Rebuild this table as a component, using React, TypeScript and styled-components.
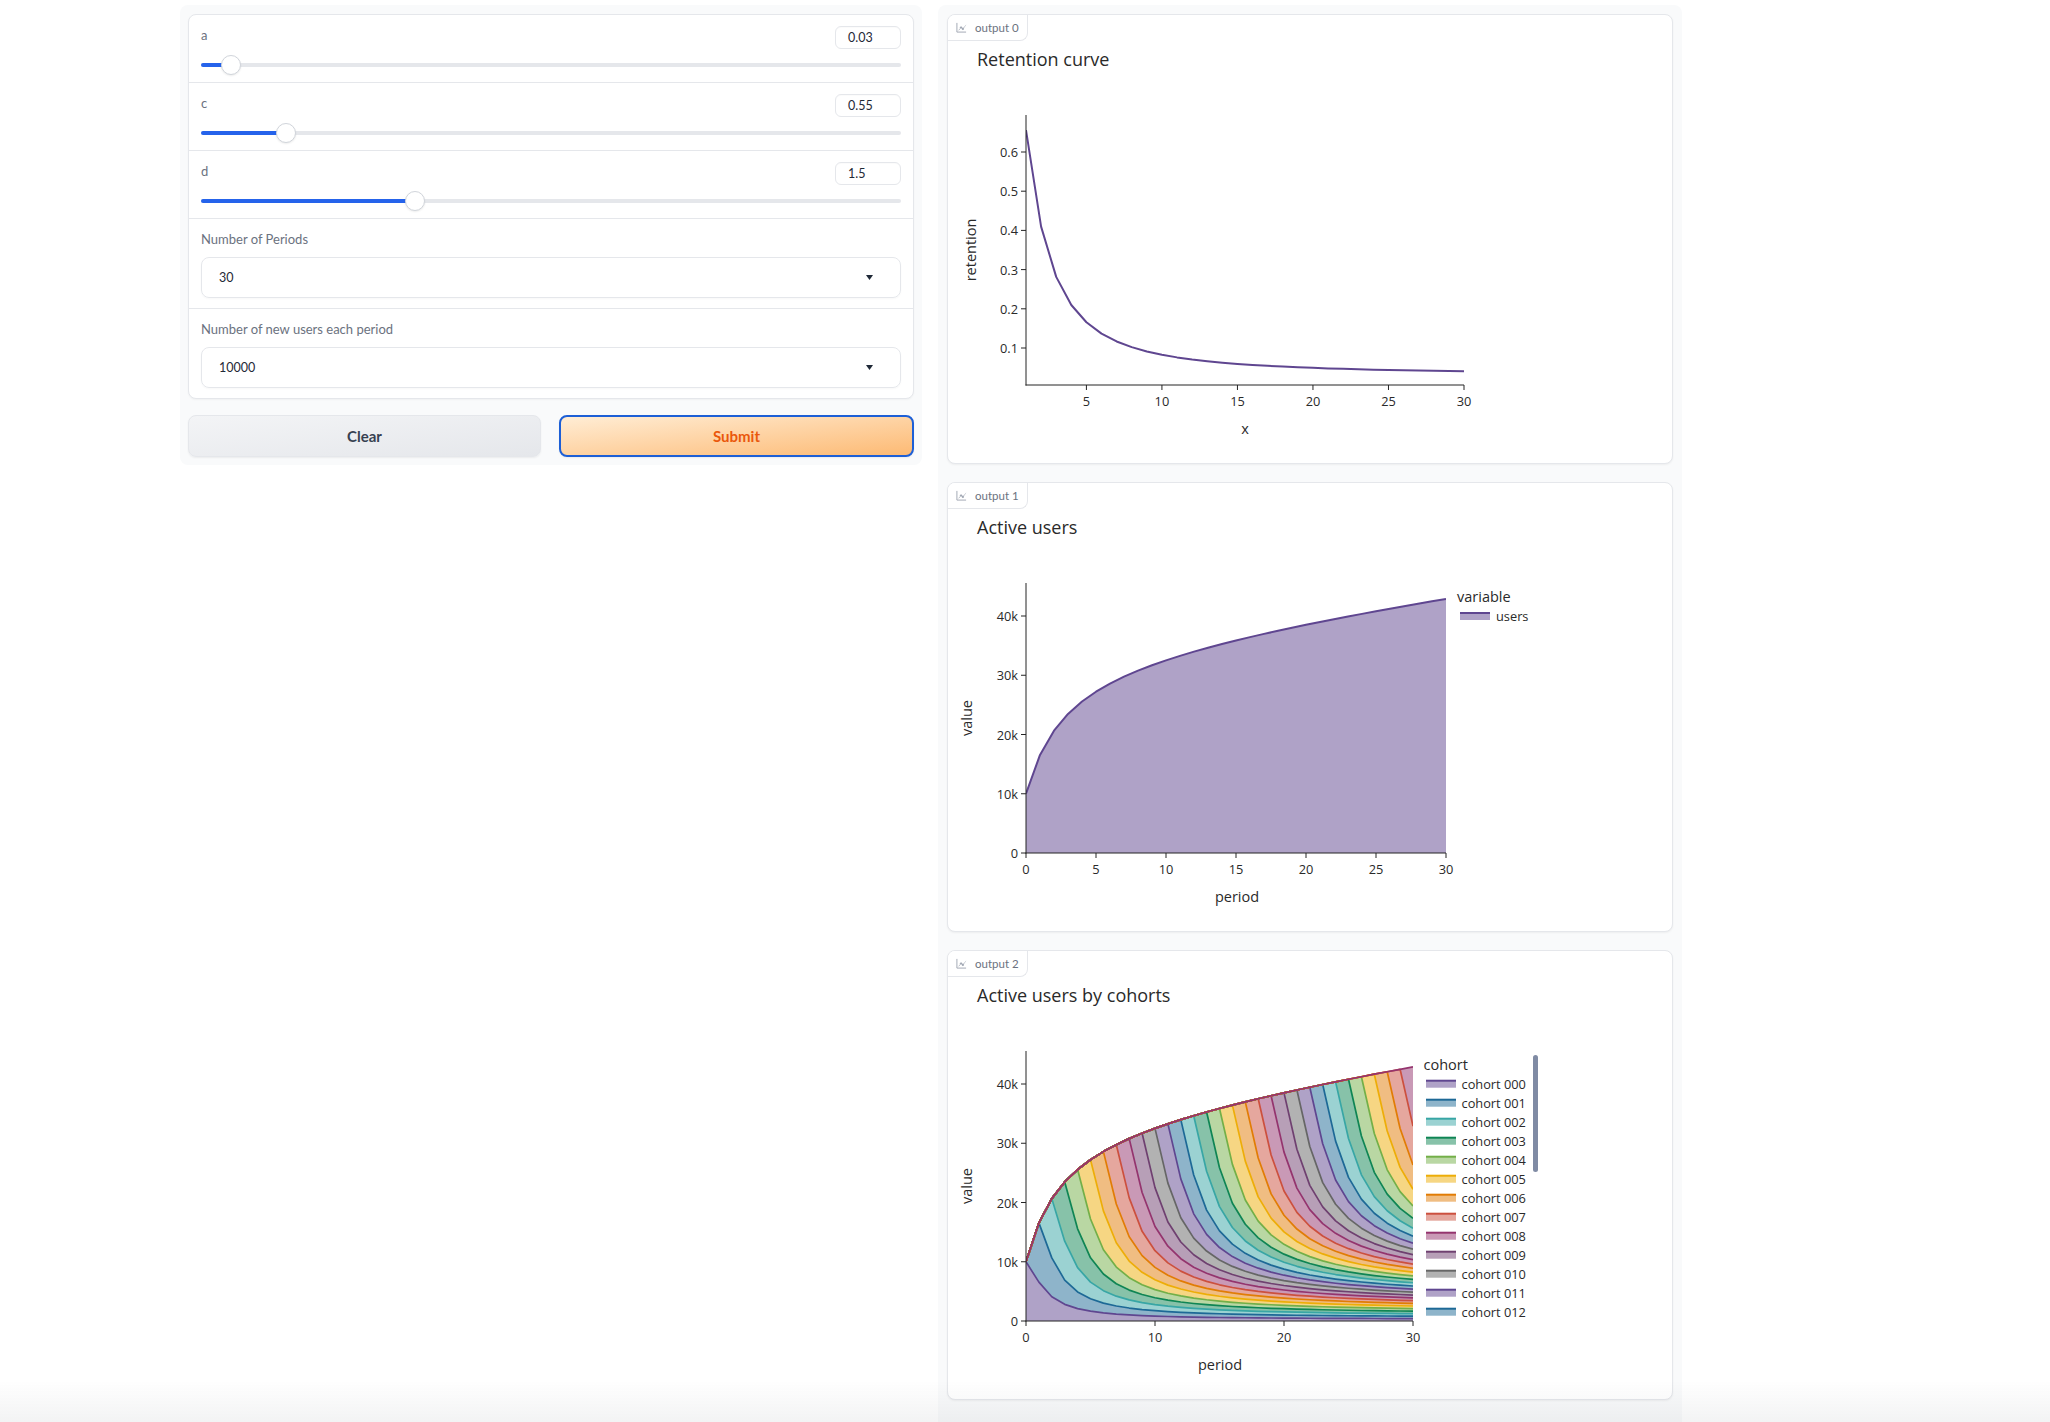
import React from 'react';
import styled, {createGlobalStyle} from "styled-components";

// model parameters shown in the form
const A = 0.03;
const C = 0.55;
const D = 1.5;
const PERIODS = 30;
const NEW_USERS = 10000;

const retention = (x: number) => A + (1 - A) / (1 + C * Math.pow(x, D));
const range = (n: number) => Array.from({length: n}, (_, i) => i);

const PRISM = [
    [95, 70, 144], [29, 105, 150], [56, 166, 165], [15, 133, 84], [115, 175, 72], [237, 173, 8],
    [225, 124, 5], [204, 80, 62], [148, 52, 110], [111, 64, 112], [102, 102, 102],
];
const rgb = (c: number[], alpha = 1) => `rgba(${c[0]}, ${c[1]}, ${c[2]}, ${alpha})`;

const cohorts = range(PERIODS + 1).map(i =>
    range(PERIODS + 1).map(t => (t >= i ? NEW_USERS * retention(t - i) : 0))
);
const cumulative: number[][] = [];
cohorts.forEach((vals, i) => cumulative.push(vals.map((v, t) => v + (i ? cumulative[i - 1][t] : 0))));
const totals = cumulative[PERIODS];

const PLOT_TOP = 100;
const PLOT_BOTTOM = 370;
const PLOT_LEFT = 78;
const AXIS = '#242424';
const PLOT_FONT = '"Open Sans", "DejaVu Sans", sans-serif';

const GlobalStyle = createGlobalStyle`
  html, body {
    margin: 0;
    padding: 0;
    background: #ffffff;
  }

  body {
    font-family: Lato, "Liberation Sans", sans-serif;
    color: #1f2937;
  }

  * {
    box-sizing: border-box;
  }
`

const Page = styled.div`
  display: flex;
  align-items: flex-start;
  gap: 16px;
  padding: 5px 0 0 180px;
`

const LeftColumn = styled.div`
  width: 742px;
  background: #f9fafb;
  border-radius: 8px;
  padding: 9px 8px 8px;
`

const FormCard = styled.div`
  background: #ffffff;
  border: 1px solid #e5e7eb;
  border-radius: 8px;
  box-shadow: 0 1px 2px rgba(0, 0, 0, 0.04);
  overflow: hidden;
`

const SliderBlock = styled.div`
  height: 68px;
  padding: 11px 12px 0;
  border-bottom: 1px solid #e5e7eb;
`

const DropBlock = styled.div<{ $last?: boolean }>`
  height: ${p => (p.$last ? 89 : 90)}px;
  padding: 11px 12px 0;
  border-bottom: ${p => (p.$last ? 'none' : '1px solid #e5e7eb')};
`

const BlockHead = styled.div`
  display: flex;
  align-items: flex-start;
  justify-content: space-between;
  height: 23px;
`

const Label = styled.span`
  display: block;
  font-size: 13px;
  line-height: 18px;
  color: #6b7280;
`

const HeadLabel = styled(Label)`
  margin-top: 0;
`

const NumberBox = styled.div`
  width: 66px;
  height: 23px;
  border: 1px solid #e5e7eb;
  border-radius: 6px;
  padding-left: 12px;
  font-size: 12.5px;
  line-height: 21px;
  color: #1f2937;
  box-shadow: inset 0 1px 1px rgba(0, 0, 0, 0.02);
`

const TrackWrap = styled.div`
  position: relative;
  height: 20px;
  margin-top: 6px;
  display: flex;
  align-items: center;
`

const Track = styled.div`
  width: 100%;
  height: 4px;
  border-radius: 2px;
  background: #e5e7eb;
  overflow: hidden;
`

const TrackFill = styled.div`
  height: 100%;
  background: #2563eb;
`

const Thumb = styled.div`
  position: absolute;
  top: 0;
  width: 20px;
  height: 20px;
  margin-left: -10px;
  border-radius: 50%;
  background: #ffffff;
  border: 1px solid #d1d5db;
  box-shadow: 0 1px 2px rgba(0, 0, 0, 0.08);
`

const DropBox = styled.div`
  margin-top: 9px;
  height: 41px;
  border: 1px solid #e5e7eb;
  border-radius: 8px;
  padding: 0 27px 0 17px;
  display: flex;
  align-items: center;
  justify-content: space-between;
  font-size: 12.5px;
  color: #1f2937;
  box-shadow: 0 1px 2px rgba(0, 0, 0, 0.03);
`

const ButtonRow = styled.div`
  display: flex;
  gap: 18px;
  margin-top: 16px;
`

const Button = styled.button<{ $primary?: boolean }>`
  flex: 1;
  height: 42px;
  border-radius: 8px;
  font-family: Lato, "Liberation Sans", sans-serif;
  font-size: 15px;
  font-weight: 700;
  cursor: pointer;
  border: ${p => (p.$primary ? '2px solid #1d5fd6' : '1px solid #e5e7eb')};
  background: ${p => (p.$primary
          ? 'linear-gradient(to bottom right, #ffedd5, #fdba74)'
          : 'linear-gradient(to bottom right, #f3f4f6, #e5e7eb)')};
  color: ${p => (p.$primary ? '#ea580c' : '#374151')};
  box-shadow: 0 1px 2px rgba(0, 0, 0, 0.06);
`

const RightColumn = styled.div`
  width: 744px;
  background: #f9fafb;
  border-radius: 8px;
  padding: 9px 9px 30px;
  display: flex;
  flex-direction: column;
  gap: 18px;
`

const PlotCard = styled.div`
  position: relative;
  height: 450px;
  background: #ffffff;
  border: 1px solid #e5e7eb;
  border-radius: 8px;
  box-shadow: 0 1px 2px rgba(0, 0, 0, 0.05);
  overflow: hidden;

  svg.plot {
    display: block;
  }
`

const BlockTab = styled.div`
  position: absolute;
  top: 0;
  left: 0;
  z-index: 1;
  height: 26px;
  display: flex;
  align-items: center;
  gap: 8px;
  padding: 0 8px 0 8px;
  background: #ffffff;
  border-right: 1px solid #e5e7eb;
  border-bottom: 1px solid #e5e7eb;
  border-bottom-right-radius: 8px;
  font-size: 11.5px;
  color: #6b7280;
`

const BottomFade = styled.div`
  position: fixed;
  left: 0;
  right: 0;
  bottom: 0;
  height: 42px;
  pointer-events: none;
  background: linear-gradient(to bottom, rgba(17, 24, 39, 0), rgba(17, 24, 39, 0.05));
`

const PlotIcon = () => (
    <svg width="11" height="11" viewBox="0 0 12 12" fill="none" stroke="#9ca3af" strokeWidth="1">
        <path d="M1 1v10h10"/>
        <path d="M3 9l2.5-3 2 1.5L11 3" strokeDasharray="1.4 1"/>
        <circle cx="5.5" cy="6" r="0.8" fill="#9ca3af"/>
        <circle cx="7.5" cy="7.5" r="0.8" fill="#9ca3af"/>
    </svg>
);

const Caret = () => (
    <svg width="7" height="5" viewBox="0 0 7 5">
        <path d="M0 0h7L3.5 5z" fill="#1f2937"/>
    </svg>
);

interface SliderProps {
    label: string
    value: string
    frac: number
}

const SliderField: React.FC<SliderProps> = ({label, value, frac}) => {
    const pos = `calc(10px + ${frac} * (100% - 20px))`;
    return (
        <SliderBlock>
            <BlockHead>
                <HeadLabel>{label}</HeadLabel>
                <NumberBox>{value}</NumberBox>
            </BlockHead>
            <TrackWrap>
                <Track><TrackFill style={{width: pos}}/></Track>
                <Thumb style={{left: pos}}/>
            </TrackWrap>
        </SliderBlock>
    );
};

interface DropProps {
    label: string
    value: string
    last?: boolean
}

const DropField: React.FC<DropProps> = ({label, value, last}) => (
    <DropBlock $last={last}>
        <Label>{label}</Label>
        <DropBox>
            <span>{value}</span>
            <Caret/>
        </DropBox>
    </DropBlock>
);

interface Tick {
    v: number
    label: string
}

interface FrameProps {
    title: string
    xRight: number
    xs: (v: number) => number
    ys: (v: number) => number
    xTicks: Tick[]
    yTicks: Tick[]
    xTitle: string
    xTitleX: number
    yTitle: string
    yTitleX: number
    clipId: string
    children?: React.ReactNode
    extra?: React.ReactNode
}

const PlotFrame: React.FC<FrameProps> = (p) => (
    <svg className="plot" width="726" height="448" fontFamily={PLOT_FONT}>
        <defs>
            <clipPath id={p.clipId}>
                <rect x={PLOT_LEFT} y={PLOT_TOP} width={p.xRight - PLOT_LEFT} height={PLOT_BOTTOM - PLOT_TOP}/>
            </clipPath>
        </defs>
        <text x="29" y="43.5" fontSize="18" fill="#2a2a2a" dominantBaseline="central">{p.title}</text>
        <g clipPath={`url(#${p.clipId})`}>{p.children}</g>
        <line x1={PLOT_LEFT} y1={PLOT_TOP} x2={PLOT_LEFT} y2={PLOT_BOTTOM + 0.5} stroke={AXIS}/>
        <line x1={PLOT_LEFT - 0.5} y1={PLOT_BOTTOM} x2={p.xRight} y2={PLOT_BOTTOM} stroke={AXIS}/>
        {p.xTicks.map(t => (
            <g key={t.label}>
                <line x1={p.xs(t.v)} x2={p.xs(t.v)} y1={PLOT_BOTTOM} y2={PLOT_BOTTOM + 5} stroke={AXIS}/>
                <text x={p.xs(t.v)} y={PLOT_BOTTOM + 16} fontSize="12.8" fill="#2a2a2a" textAnchor="middle"
                      dominantBaseline="central">{t.label}</text>
            </g>
        ))}
        {p.yTicks.map(t => (
            <g key={t.label}>
                <line x1={PLOT_LEFT - 5} x2={PLOT_LEFT} y1={p.ys(t.v)} y2={p.ys(t.v)} stroke={AXIS}/>
                <text x={PLOT_LEFT - 8} y={p.ys(t.v)} fontSize="12.8" fill="#2a2a2a" textAnchor="end"
                      dominantBaseline="central">{t.label}</text>
            </g>
        ))}
        <text x={p.xTitleX} y="413" fontSize="14.5" fill="#2a2a2a" textAnchor="middle"
              dominantBaseline="central">{p.xTitle}</text>
        <text x={p.yTitleX} y="235" fontSize="14.5" fill="#2a2a2a" textAnchor="middle" dominantBaseline="central"
              transform={`rotate(-90 ${p.yTitleX} 235)`}>{p.yTitle}</text>
        {p.extra}
    </svg>
);

const userTicks: Tick[] = [0, 10000, 20000, 30000, 40000].map(v => ({v, label: v ? `${v / 1000}k` : '0'}));
const usersY = (v: number) => PLOT_BOTTOM - v * 0.005925;

const RetentionChart = () => {
    const xs = (x: number) => PLOT_LEFT + (x - 1) * (438 / 29);
    const ys = (v: number) => 137 + (0.6 - v) * 392;
    const pts = range(PERIODS).map(i => `${xs(i + 1)},${ys(retention(i + 1))}`).join(' ');
    return (
        <PlotFrame title="Retention curve" xRight={516} xs={xs} ys={ys} clipId="clip0"
                   xTicks={[5, 10, 15, 20, 25, 30].map(v => ({v, label: String(v)}))}
                   yTicks={[0.1, 0.2, 0.3, 0.4, 0.5, 0.6].map(v => ({v, label: v.toFixed(1)}))}
                   xTitle="x" xTitleX={297} yTitle="retention" yTitleX={22}>
            <polyline points={pts} fill="none" stroke={rgb(PRISM[0])} strokeWidth="2" strokeLinejoin="round"/>
        </PlotFrame>
    );
};

const LegendSwatch: React.FC<{ x: number, y: number, color: number[] }> = ({x, y, color}) => (
    <g>
        <rect x={x} y={y - 3} width="30" height="7" fill={rgb(color, 0.5)}/>
        <line x1={x} x2={x + 30} y1={y - 3} y2={y - 3} stroke={rgb(color)} strokeWidth="2"/>
    </g>
);

const ActiveUsersChart = () => {
    const xs = (t: number) => PLOT_LEFT + t * 14;
    const top = totals.map((v, t) => `${xs(t)},${usersY(v)}`);
    const area = `${xs(0)},${PLOT_BOTTOM} ${top.join(' ')} ${xs(PERIODS)},${PLOT_BOTTOM}`;
    return (
        <PlotFrame title="Active users" xRight={498} xs={xs} ys={usersY} clipId="clip1"
                   xTicks={[0, 5, 10, 15, 20, 25, 30].map(v => ({v, label: String(v)}))}
                   yTicks={userTicks} xTitle="period" xTitleX={289} yTitle="value" yTitleX={18.5}
                   extra={
                       <g>
                           <text x="509" y="113" fontSize="14.5" fill="#2a2a2a" dominantBaseline="central">variable</text>
                           <LegendSwatch x={512} y={133} color={PRISM[0]}/>
                           <text x="548" y="133" fontSize="12.8" fill="#2a2a2a" dominantBaseline="central">users</text>
                       </g>
                   }>
            <polygon points={area} fill={rgb(PRISM[0], 0.5)}/>
            <polyline points={top.join(' ')} fill="none" stroke={rgb(PRISM[0])} strokeWidth="2"
                      strokeLinejoin="round"/>
        </PlotFrame>
    );
};

const CohortChart = () => {
    const xs = (t: number) => PLOT_LEFT + t * 12.9;
    const lineOf = (vals: number[]) => vals.map((v, t) => `${xs(t)},${usersY(v)}`);
    const fills = cumulative.map((upper, i) => {
        const lower = i ? lineOf(cumulative[i - 1]).reverse() : [`${xs(PERIODS)},${PLOT_BOTTOM}`, `${xs(0)},${PLOT_BOTTOM}`];
        return [...lineOf(upper), ...lower].join(' ');
    });
    return (
        <PlotFrame title="Active users by cohorts" xRight={465} xs={xs} ys={usersY} clipId="clip2"
                   xTicks={[0, 10, 20, 30].map(v => ({v, label: String(v)}))}
                   yTicks={userTicks} xTitle="period" xTitleX={272} yTitle="value" yTitleX={18.5}
                   extra={
                       <g>
                           <text x="475.5" y="113" fontSize="14.5" fill="#2a2a2a" dominantBaseline="central">cohort</text>
                           {range(13).map(i => (
                               <g key={i}>
                                   <LegendSwatch x={478} y={132.7 + i * 19} color={PRISM[i % PRISM.length]}/>
                                   <text x="513.5" y={132.7 + i * 19} fontSize="12.8" fill="#2a2a2a"
                                         dominantBaseline="central">{`cohort ${String(i).padStart(3, '0')}`}</text>
                               </g>
                           ))}
                           <rect x="585" y="104" width="5" height="117" rx="2.5" fill="#808ba4"/>
                       </g>
                   }>
            {fills.map((pts, i) => (
                <polygon key={`f${i}`} points={pts} fill={rgb(PRISM[i % PRISM.length], 0.5)}/>
            ))}
            {cumulative.map((vals, i) => (
                <polyline key={`l${i}`} points={lineOf(vals).join(' ')} fill="none"
                          stroke={rgb(PRISM[i % PRISM.length])} strokeWidth="1.7" strokeLinejoin="round"/>
            ))}
        </PlotFrame>
    );
};

const OutputCard: React.FC<{ name: string, children: React.ReactNode }> = ({name, children}) => (
    <PlotCard>
        <BlockTab><PlotIcon/>{name}</BlockTab>
        {children}
    </PlotCard>
);

const App: React.FC = () => {
    return (
        <>
            <GlobalStyle/>
            <Page>
                <LeftColumn>
                    <FormCard>
                        <SliderField label="a" value="0.03" frac={0.03}/>
                        <SliderField label="c" value="0.55" frac={0.11}/>
                        <SliderField label="d" value="1.5" frac={0.3}/>
                        <DropField label="Number of Periods" value="30"/>
                        <DropField label="Number of new users each period" value="10000" last/>
                    </FormCard>
                    <ButtonRow>
                        <Button>Clear</Button>
                        <Button $primary>Submit</Button>
                    </ButtonRow>
                </LeftColumn>
                <RightColumn>
                    <OutputCard name="output 0"><RetentionChart/></OutputCard>
                    <OutputCard name="output 1"><ActiveUsersChart/></OutputCard>
                    <OutputCard name="output 2"><CohortChart/></OutputCard>
                </RightColumn>
            </Page>
            <BottomFade/>
        </>
    );
};

export default App;
